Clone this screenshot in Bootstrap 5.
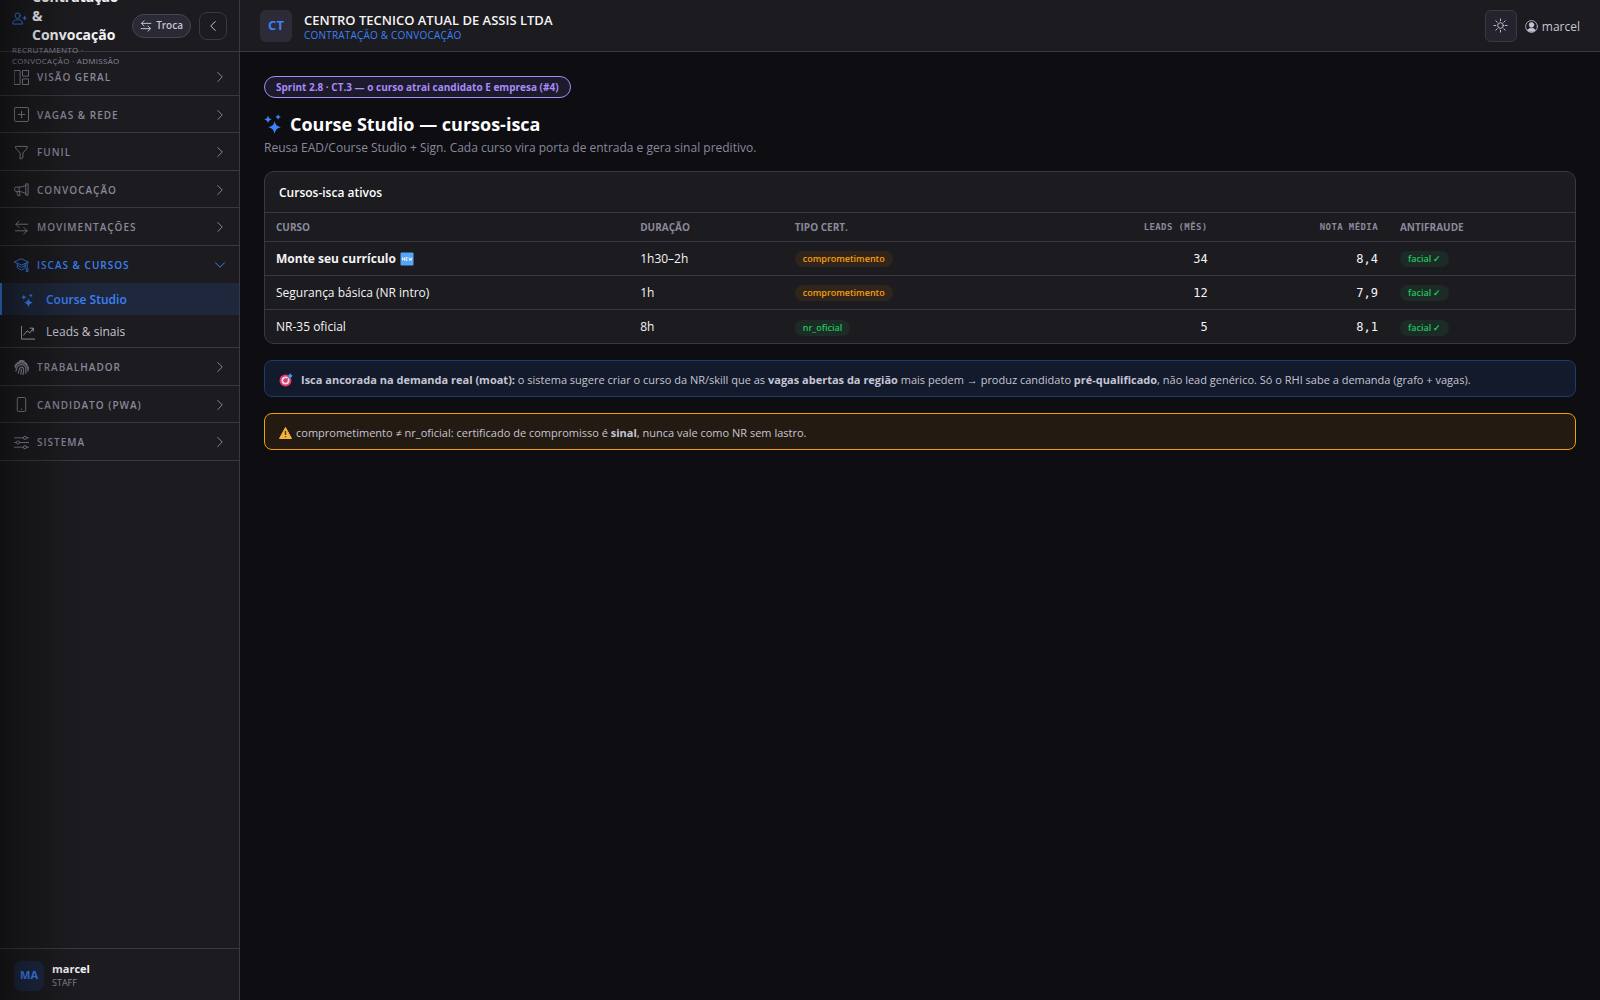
<!DOCTYPE html>
<html lang="pt-BR" data-bs-theme="dark">
<head>
<meta charset="utf-8">
<meta name="viewport" content="width=device-width, initial-scale=1">
<title>Course Studio — cursos-isca</title>
<link rel="stylesheet" href="https://cdn.jsdelivr.net/npm/bootstrap@5.3.0/dist/css/bootstrap.min.css">
<style>
:root{--page:#0d0d12;--panel:#1c1b1f;--line:#3a3943;--soft:#2a2935;--muted:#8a899c;--text:#f4f4f6;--text2:#c6c5d4;--blue:#3b82f6;--purple:#a78bfa;--orange:#f59e0b;--green:#22c55e}
body{background:var(--page);color:var(--text);font-family:"Open Sans","Noto Sans",sans-serif;font-size:12px;line-height:1.5}
svg{display:block;flex:none}
.ic{width:15px;height:15px;fill:none;stroke:currentColor;stroke-width:1;stroke-linecap:round;stroke-linejoin:round}
.ic-sm{width:12px;height:12px;stroke-width:1.3}
.ic-user{width:13px;height:13px}
.ic-sub{width:14px;margin-right:11px}
.ic-title{width:20px;height:20px;color:var(--blue);margin-right:6px}
a{text-decoration:none;color:inherit}
.side{width:240px;background:var(--panel);border-right:1px solid var(--line);position:relative}
.side::after{content:"";position:absolute;inset:0 auto 0 0;width:84px;background:linear-gradient(90deg,rgba(0,0,0,.42),rgba(0,0,0,.22) 35%,transparent);pointer-events:none}
.side-head{height:52px;border-bottom:1px solid var(--line);padding:0 12px}
.brand{width:112px;padding-top:2px}
.brand-name{font-size:14px;line-height:19px;font-weight:700}
.brand-name .ic{color:var(--blue);margin-right:5px}
.brand-sub{font-size:8px;line-height:11px;letter-spacing:.3px;color:var(--muted);white-space:nowrap}
.pill-btn{height:24px;border:1px solid #454451;border-radius:12px;background:var(--soft);color:var(--text2);font-size:10px;font-weight:600;padding:0 7px}
.sq-btn{width:28px;height:28px;border:1px solid var(--line);border-radius:8px;background:transparent;color:var(--text2);padding:0}
.menu{padding-top:6px}
.group{border:0;border-bottom:1px solid var(--line);background:none;width:100%;padding:12px 13px 10px 14px;color:var(--muted);text-align:left}
.group .ic{margin-top:-2px;margin-bottom:-2px}
.group-name{font-size:10px;line-height:1.45;font-weight:600;letter-spacing:1px}
.group.open{color:var(--blue);border-bottom-color:transparent}
.sub{height:32px;padding:2px 0 0 21px;font-size:12px;color:var(--text2)}
.sub.on{background:#1e273b;color:var(--blue);font-weight:600;border-left:2px solid var(--blue);padding-left:19px}
.sub-box{border-bottom:1px solid var(--line)}
.side-foot{height:52px;border-top:1px solid var(--line);padding:2px 14px 0}
.ava{width:30px;height:30px;border-radius:8px;background:#1c2740;color:var(--blue);font-size:11px;font-weight:700}
.foot-name{font-size:11px;line-height:14px;font-weight:700}
.foot-role{font-size:9px;line-height:13px;color:var(--muted)}
.top{height:52px;background:var(--panel);border-bottom:1px solid var(--line);padding:0 20px}
.logo-box{width:32px;height:32px;border-radius:6px;background:#2c2b37;color:var(--blue);font-size:13px;font-weight:700}
.org-block{padding-top:4px}
.org{font-size:13px;line-height:15px;font-weight:600}
.org-sub{font-size:10px;line-height:14px;letter-spacing:.2px;color:var(--blue)}
.theme-btn{width:32px;height:32px;border:1px solid var(--line);border-radius:6px;background:#25242e;color:var(--text2);padding:0}
.user{color:var(--text2);padding-top:2px}
.body-pad{padding:24px}
.sprint{height:22px;border:1px solid var(--purple);border-radius:11px;background:#1d1a2b;color:var(--purple);font-size:10px;font-weight:700;padding:0 11px}
.title{font-size:18px;line-height:24px;font-weight:700;margin:14px 0 0}
.lede{font-size:12px;line-height:18px;color:var(--muted);margin:3px 0 14px}
.panel{background:var(--panel);border:1px solid var(--line);border-radius:10px;overflow:hidden}
.panel-head{height:41px;border-bottom:1px solid var(--line);padding:3px 14px 0;font-size:12px;font-weight:600;margin:0}
.grid-t{width:100%;table-layout:fixed}
.grid-t th,.grid-t td{padding:1px 11px 0;border-bottom:1px solid var(--line);white-space:nowrap}
.grid-t th{height:28px;font-size:10px;color:var(--muted);font-weight:700}
.grid-t td{height:34px}
.grid-t tr:last-child td{border-bottom:0}
.grid-t .num{text-align:right;font-family:"DejaVu Sans Mono",monospace}
.grid-t th.num{font-size:9px;letter-spacing:.4px}
.c1{width:27.8%}.c2{width:11.8%}.c3{width:20%}.c4{width:13.2%}.c5{width:13%}
.tag{height:16px;border-radius:8px;padding:0 8px;font-size:9px;line-height:16px;font-weight:600;display:inline-block;vertical-align:middle}
.tag-o{background:#30251c;color:var(--orange)}
.tag-g{background:#1c2b25;color:var(--green)}
.note{border:1px solid #1f3a6b;border-radius:8px;background:#121a2b;color:var(--text2);font-size:11px;min-height:37px;padding:3px 14px 0;margin-top:16px}
.note-w{border-color:var(--orange);background:#231a12}
</style>
<script src="https://cdn.jsdelivr.net/npm/bootstrap@5.3.0/dist/js/bootstrap.bundle.min.js"></script>
</head>
<body>
<svg width="0" height="0" class="position-absolute" aria-hidden="true">
<symbol id="stars" viewBox="0 0 16 16"><path fill="currentColor" stroke="none" d="M8.500 5.500c.9 3.300 1.600 4 5 5-3.400 1-4.100 1.900-5 5.300-.9-3.400-1.600-4.300-5-5.300 3.400-1 4.100-1.700 5-5zM3.200 1.200c.6 2.100 1 2.500 3 3.100-2 .6-2.400 1-3 3.100-.6-2.100-1-2.500-3-3.100 2-.6 2.400-1 3-3.100zM11.300 0c.4 1.500.8 1.900 2.300 2.300-1.500.4-1.900.8-2.300 2.400-.4-1.600-.8-2-2.300-2.400 1.500-.4 1.900-.8 2.300-2.300z"/></symbol>
<symbol id="right" viewBox="0 0 16 16"><path d="M5 2l6 6-6 6"/></symbol>
<symbol id="swap" viewBox="0 0 16 16"><path d="M14.500 4.500H2M5.500 1L2 4.500 5.500 8M1.500 11.500H14M10.500 8l3.500 3.500-3.500 3.500"/></symbol>
</svg>
<div class="d-flex min-vh-100">
<aside class="side d-flex flex-column flex-shrink-0">
  <div class="side-head d-flex align-items-center">
    <div class="brand d-flex flex-column justify-content-center">
      <div class="d-flex brand-name"><svg class="ic mt-4" viewBox="0 0 16 16"><circle cx="6" cy="5" r="2.800"/><path d="M.8 13.500c0-3 2-4.200 5.200-4.200s5.200 1.200 5.200 4.200zM13.500 5.500v4M11.500 7.500h4"/></svg><span>Contratação &amp; Convocação</span></div>
      <div class="brand-sub">RECRUTAMENTO ·<br>CONVOCAÇÃO · ADMISSÃO</div>
    </div>
    <button class="pill-btn d-flex align-items-center gap-1 ms-auto"><svg class="ic ic-sm"><use href="#swap"/></svg>Troca</button>
    <button class="sq-btn d-flex align-items-center justify-content-center ms-2" aria-label="Recolher menu"><svg class="ic ic-sm" viewBox="0 0 16 16"><path d="M11 2L5 8l6 6"/></svg></button>
  </div>
  <nav class="menu flex-grow-1">
    <button class="group d-flex align-items-center"><svg class="ic me-2" viewBox="0 0 16 16"><path d="M.5.500h6v15h-6zM9.500.500h6v6h-6zM9.500 9.500h6v6h-6z"/></svg><span class="group-name">VISÃO GERAL</span><svg class="ic ic-sm ms-auto"><use href="#right"/></svg></button>
    <button class="group d-flex align-items-center"><svg class="ic me-2" viewBox="0 0 16 16"><rect x=".5" y=".5" width="15" height="15" rx="1.500"/><path d="M8 4.500v7M4.500 8h7"/></svg><span class="group-name">VAGAS &amp; REDE</span><svg class="ic ic-sm ms-auto"><use href="#right"/></svg></button>
    <button class="group d-flex align-items-center"><svg class="ic me-2" viewBox="0 0 16 16"><path d="M2 1.500h12v2L9.500 8.500v5l-3 1.500V8.500L2 3.500z"/></svg><span class="group-name">FUNIL</span><svg class="ic ic-sm ms-auto"><use href="#right"/></svg></button>
    <button class="group d-flex align-items-center"><svg class="ic me-2" viewBox="0 0 16 16"><path d="M13 2h2v12h-2zM13 3.500C10.500 5 7 5.500 2 5.500a1.300 1.300 0 0 0-1.300 1.300v2A1.300 1.300 0 0 0 2 10c5 0 8.500.8 11 2.500M5.500 5.500V10M3 10l1 4.500h2.500L5.500 10"/></svg><span class="group-name">CONVOCAÇÃO</span><svg class="ic ic-sm ms-auto"><use href="#right"/></svg></button>
    <button class="group d-flex align-items-center"><svg class="ic me-2"><use href="#swap"/></svg><span class="group-name">MOVIMENTAÇÕES</span><svg class="ic ic-sm ms-auto"><use href="#right"/></svg></button>
    <button class="group open d-flex align-items-center" aria-expanded="true"><svg class="ic me-2" viewBox="0 0 16 16"><path d="M8 2l7.500 3.500L8 8.500.5 5.500zM3.500 7v4.500L8 14l4-2.500V7M3.500 9L8 11l4-2M14 6.500V12M13 15v-2.500h2V15z"/></svg><span class="group-name">ISCAS &amp; CURSOS</span><svg class="ic ic-sm ms-auto" viewBox="0 0 16 16"><path d="M2 5l6 6 6-6"/></svg></button>
    <div class="sub-box">
      <a href="#" class="sub on d-flex align-items-center"><svg class="ic ic-sub"><use href="#stars"/></svg><span>Course Studio</span></a>
      <a href="#" class="sub d-flex align-items-center"><svg class="ic ic-sub" viewBox="0 0 16 16"><path d="M.5 1v14.500H16M3 11l4-5 3 2.500 4-5M10.500 3H14v3.500"/></svg><span>Leads &amp; sinais</span></a>
    </div>
    <button class="group d-flex align-items-center"><svg class="ic me-2" viewBox="0 0 16 16"><path stroke-width="1.300" d="M2 5a7 7 0 0 1 12 0M1.500 8.500C2 5 5 3 8 3s6 2 6.500 6M2 12c1-2 .5-7 6-7s5 6 4.500 9M4.500 14C6 11 5 7.500 8 7.500s2.500 4.500 1.500 8M7 15c1-2 1-4 1-5M1 6.500l1-2M6 .8C7.500.5 9 .5 10.500 1M15 7c.3 2 .2 3-.2 5"/></svg><span class="group-name">TRABALHADOR</span><svg class="ic ic-sm ms-auto"><use href="#right"/></svg></button>
    <button class="group d-flex align-items-center"><svg class="ic me-2" viewBox="0 0 16 16"><rect x="3.500" y=".5" width="9" height="15" rx="1.500"/><path d="M7.700 13h.6"/></svg><span class="group-name">CANDIDATO (PWA)</span><svg class="ic ic-sm ms-auto"><use href="#right"/></svg></button>
    <button class="group d-flex align-items-center"><svg class="ic me-2" viewBox="0 0 16 16"><path d="M.5 3H10M13.500 3h2M.5 8h2M6 8h9.500M.5 13H10M13.500 13h2"/><circle cx="11.700" cy="3" r="1.700"/><circle cx="4.300" cy="8" r="1.700"/><circle cx="11.700" cy="13" r="1.700"/></svg><span class="group-name">SISTEMA</span><svg class="ic ic-sm ms-auto"><use href="#right"/></svg></button>
  </nav>
  <div class="side-foot d-flex align-items-center gap-2">
    <div class="ava d-flex align-items-center justify-content-center">MA</div>
    <div><div class="foot-name">marcel</div><div class="foot-role">STAFF</div></div>
  </div>
</aside>
<div class="flex-grow-1">
  <header class="top d-flex align-items-center">
    <div class="logo-box d-flex align-items-center justify-content-center me-2">CT</div>
    <div class="org-block ms-1"><div class="org">CENTRO TECNICO ATUAL DE ASSIS LTDA</div><div class="org-sub">CONTRATAÇÃO &amp; CONVOCAÇÃO</div></div>
    <button class="theme-btn d-flex align-items-center justify-content-center ms-auto me-2" aria-label="Tema"><svg class="ic" viewBox="0 0 16 16"><circle cx="8" cy="8" r="3"/><path d="M8 1v2M8 13v2M1 8h2M13 8h2M3 3l1.500 1.500M11.500 11.500L13 13M3 13l1.500-1.500M11.500 4.500L13 3"/></svg></button>
    <a href="#" class="user d-flex align-items-center gap-1"><svg class="ic ic-user" viewBox="0 0 16 16"><circle cx="8" cy="8" r="7.300"/><circle cx="8" cy="6" r="2.800" fill="currentColor"/><path fill="currentColor" d="M3.500 12.500C4.500 10.500 6 10 8 10s3.500.5 4.500 2.500C11 14.500 5 14.500 3.500 12.500z"/></svg>marcel</a>
  </header>
  <main class="body-pad">
    <div class="d-flex"><span class="sprint d-flex align-items-center">Sprint 2.8 · CT.3 — o curso atrai candidato E empresa (#4)</span></div>
    <h1 class="title d-flex align-items-center"><svg class="ic ic-title"><use href="#stars"/></svg>Course Studio — cursos-isca</h1>
    <p class="lede">Reusa EAD/Course Studio + Sign. Cada curso vira porta de entrada e gera sinal preditivo.</p>
    <section class="panel">
      <h2 class="panel-head d-flex align-items-center">Cursos-isca ativos</h2>
      <table class="grid-t">
        <colgroup><col class="c1"><col class="c2"><col class="c3"><col class="c4"><col class="c5"><col></colgroup>
        <thead><tr><th>CURSO</th><th>DURAÇÃO</th><th>TIPO CERT.</th><th class="num">LEADS (MÊS)</th><th class="num">NOTA MÉDIA</th><th>ANTIFRAUDE</th></tr></thead>
        <tbody>
          <tr><td><div class="d-flex align-items-center"><b>Monte seu currículo</b><svg class="ms-1" width="14" height="14" viewBox="0 0 14 14" role="img" aria-label="novo"><rect x=".5" y=".5" width="13" height="13" rx="1" fill="#55a5fb"/><path d="M2.500 8.500V5.500l2 3v-3M7.500 5.500H6v3h1.500M6 7h1.500M9 5.500l.7 3 .7-2 .7 2 .7-3" stroke="#fff" stroke-width=".8" fill="none"/></svg></div></td><td>1h30–2h</td><td><span class="tag tag-o">comprometimento</span></td><td class="num">34</td><td class="num">8,4</td><td><span class="tag tag-g">facial ✓</span></td></tr>
          <tr><td>Segurança básica (NR intro)</td><td>1h</td><td><span class="tag tag-o">comprometimento</span></td><td class="num">12</td><td class="num">7,9</td><td><span class="tag tag-g">facial ✓</span></td></tr>
          <tr><td>NR-35 oficial</td><td>8h</td><td><span class="tag tag-g">nr_oficial</span></td><td class="num">5</td><td class="num">8,1</td><td><span class="tag tag-g">facial ✓</span></td></tr>
        </tbody>
      </table>
    </section>
    <div class="note d-flex align-items-center"><svg class="me-2" width="14" height="14" viewBox="0 0 14 14"><circle cx="6.500" cy="7.500" r="6" fill="#e0396a"/><circle cx="6.500" cy="7.500" r="4" fill="#f6d5df"/><circle cx="6.500" cy="7.500" r="2.300" fill="#e0396a"/><path d="M6.500 7.500L11 3" stroke="#2b6fb0"/><path d="M9.500 4.500V2L11.500.3l.5 1.700 1.800.6L12 4.500z" fill="#3ba0ee"/></svg><span><b>Isca ancorada na demanda real (moat):</b> o sistema sugere criar o curso da NR/skill que as <b>vagas abertas da região</b> mais pedem → produz candidato <b>pré-qualificado</b>, não lead genérico. Só o RHI sabe a demanda (grafo + vagas).</span></div>
    <div class="note note-w d-flex align-items-center"><svg class="me-1" width="13" height="12" viewBox="0 0 13 12"><path d="M6.500.5l6 11H.5z" fill="#f6b23c" stroke="#f6b23c" stroke-linejoin="round"/><path d="M6.500 4v4M6.500 9.200v1" stroke="#4a3520" stroke-width="1.400"/></svg><span>comprometimento ≠ nr_oficial: certificado de compromisso é <b>sinal</b>, nunca vale como NR sem lastro.</span></div>
  </main>
</div>
</div>
</body>
</html>
